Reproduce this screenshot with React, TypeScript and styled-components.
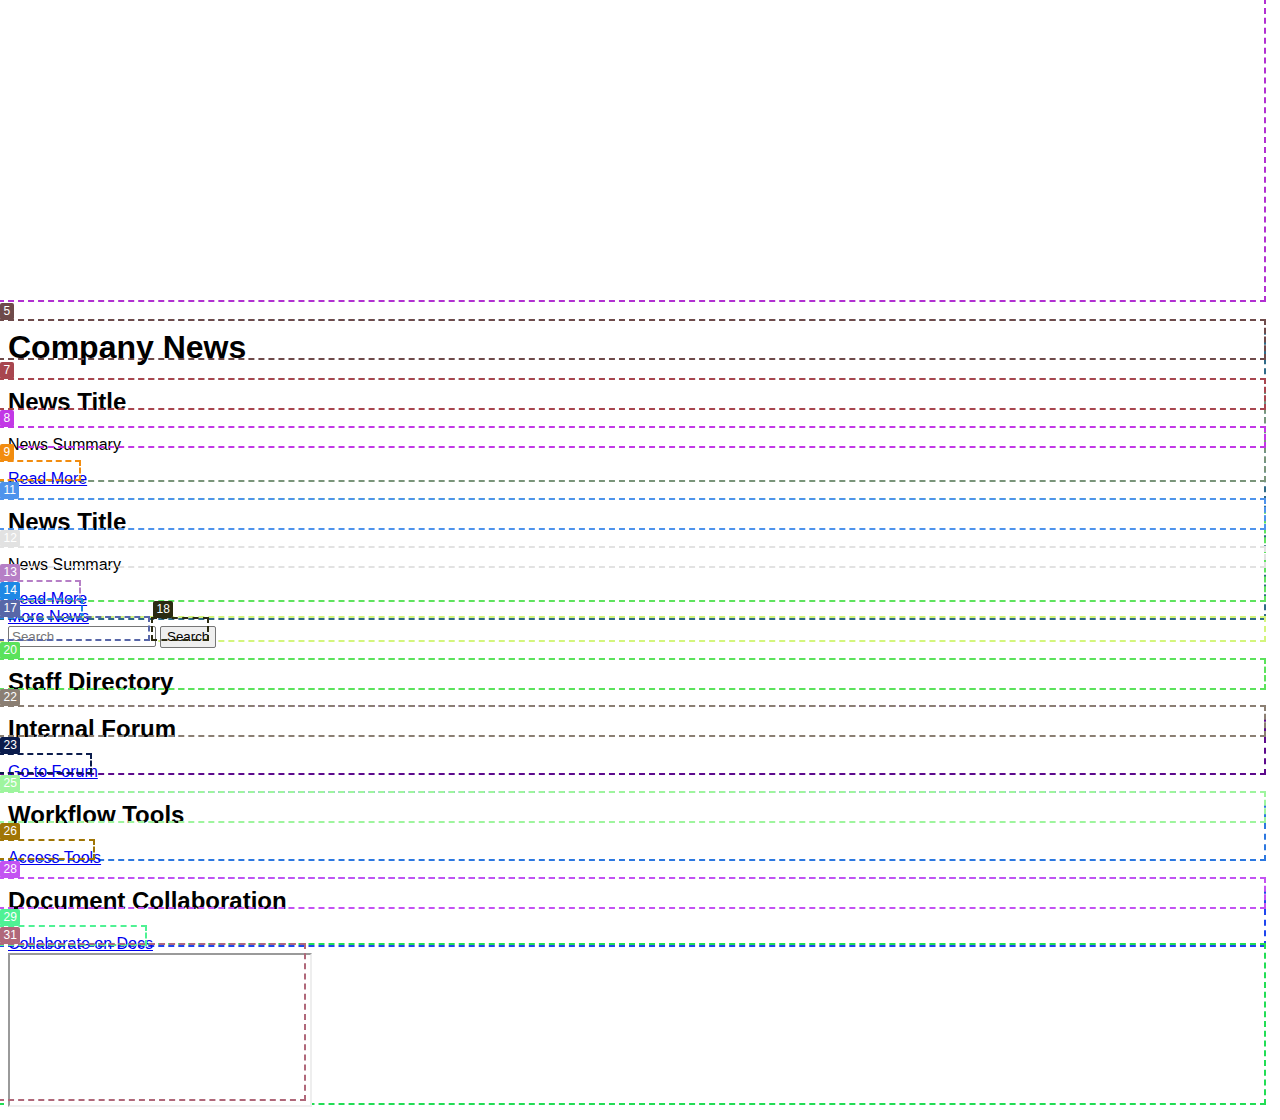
import React from "react";
import styled, { createGlobalStyle, css } from "styled-components";

const GlobalStyle = createGlobalStyle`
  html, body { background: #ffffff; }
  body {
    margin: 0;
    font-family: "Liberation Sans", Arial, sans-serif;
    font-size: 16px;
    color: #000000;
  }
`;

type C = { $c: string };

/* debug frame: a dashed outline drawn 8px up/left of the element */
const framed = css<C>`
  position: relative;
  &::before {
    content: "";
    position: absolute;
    left: -8px;
    top: -8px;
    width: 100%;
    height: 100%;
    outline: 2px dashed ${(p) => p.$c};
    pointer-events: none;
  }
`;

const Page = styled.div`
  padding: 8px;
`;

const Badge = styled.span<C>`
  position: absolute;
  left: -8px;
  top: -9px;
  transform: translateY(-100%);
  background: ${(p) => p.$c};
  color: #ffffff;
  font: 400 12px/17px "Liberation Sans", Arial, sans-serif;
  padding: 0 3.5px;
  border-radius: 2px;
  white-space: nowrap;
  text-decoration: none;
  pointer-events: none;
`;

const Header = styled.header<C>`
  ${framed}
  display: block;
  height: 300px;
`;

const NewsSection = styled.section<C>`
  ${framed}
  display: block;
`;

const Article = styled.article<C>`
  ${framed}
  display: block;
`;

const ToolSection = styled.section<C>`
  ${framed}
  display: block;
`;

const PageTitle = styled.h1<C>`
  ${framed}
  font-size: 32px;
  font-weight: 700;
  line-height: normal;
  margin: 21.44px 0;
`;

const Heading = styled.h2<C>`
  ${framed}
  font-size: 24px;
  font-weight: 700;
  line-height: normal;
  margin: 19.92px 0;
`;

const Summary = styled.p<C>`
  ${framed}
  margin: 16px 0;
`;

const TextLink = styled.a<C>`
  ${framed}
  color: #0000ee;
  text-decoration: underline;
`;

const SearchForm = styled.form<C>`
  ${framed}
  display: flex;
  align-items: flex-start;
  gap: 4px;
  height: 22px;
  margin: 0;
`;

const Field = styled.span<C>`
  ${framed}
  display: block;
`;

const SearchInput = styled.input`
  display: block;
  box-sizing: border-box;
  width: 148px;
  height: 21px;
  margin: 0;
  padding: 1px 3px;
  border: 1px solid #767676;
  border-radius: 2px;
  background: #ffffff;
  font: 400 13.333px "Liberation Sans", Arial, sans-serif;
  color: #000000;
  &::placeholder {
    color: #757575;
  }
`;

const SearchButton = styled.button<C>`
  ${framed}
  box-sizing: border-box;
  height: 22px;
  margin: 0;
  padding: 1px 6px;
  border: 1px solid #767676;
  border-radius: 2px;
  background: #efefef;
  color: #000000;
  font: 400 13.333px "Liberation Sans", Arial, sans-serif;
`;

const Footer = styled.footer<C>`
  ${framed}
  display: block;
`;

const FrameSlot = styled.span<C>`
  ${framed}
  display: inline-block;
`;

const DocFrame = styled.div`
  display: block;
  width: 300px;
  height: 150px;
  border-style: solid;
  border-width: 2px;
  border-color: #9a9a9a #eeeeee #eeeeee #9a9a9a;
  background: #ffffff;
`;

type NewsItem = {
  box: string;
  title: [string, string];
  summary: [string, string];
  link: [string, string];
};

const news: NewsItem[] = [
  { box: "#7a957a", title: ["#a8464f", "7"], summary: ["#c238e6", "8"], link: ["#f28c0f", "9"] },
  { box: "#5ee35e", title: ["#4e93ec", "11"], summary: ["#e2e2e2", "12"], link: ["#b67fc6", "13"] },
];

type Tool = {
  box: string;
  heading: [string, string, string];
  link?: [string, string, string];
};

const tools: Tool[] = [
  { box: "#5be25b", heading: ["#5be25b", "20", "Staff Directory"] },
  { box: "#5c0a8c", heading: ["#8b7f73", "22", "Internal Forum"], link: ["#0b1c4c", "23", "Go to Forum"] },
  { box: "#2c78e0", heading: ["#9ef59e", "25", "Workflow Tools"], link: ["#a07505", "26", "Access Tools"] },
  { box: "#1f46ee", heading: ["#c352f2", "28", "Document Collaboration"], link: ["#4ff294", "29", "Collaborate on Docs"] },
];

export default function App() {
  return (
    <Page>
      <GlobalStyle />
      <Header $c="#b12fd1" />
      <NewsSection $c="#2f6a88">
        <PageTitle $c="#6e4a4a">
          <Badge $c="#6e4a4a">5</Badge>Company News
        </PageTitle>
        {news.map((n, i) => (
          <Article key={i} $c={n.box}>
            <Heading $c={n.title[0]}>
              <Badge $c={n.title[0]}>{n.title[1]}</Badge>News Title
            </Heading>
            <Summary $c={n.summary[0]}>
              <Badge $c={n.summary[0]}>{n.summary[1]}</Badge>News Summary
            </Summary>
            <TextLink $c={n.link[0]} href="#">
              <Badge $c={n.link[0]}>{n.link[1]}</Badge>Read More
            </TextLink>
          </Article>
        ))}
        <TextLink $c="#1e88e5" href="#">
          <Badge $c="#1e88e5">14</Badge>More News
        </TextLink>
      </NewsSection>
      <SearchForm $c="#d4f57c" onSubmit={(e) => e.preventDefault()}>
        <Field $c="#5867a8">
          <Badge $c="#5867a8">17</Badge>
          <SearchInput type="text" placeholder="Search" />
        </Field>
        <SearchButton $c="#2b2b12" type="submit">
          <Badge $c="#2b2b12">18</Badge>Search
        </SearchButton>
      </SearchForm>
      {tools.map((t, i) => (
        <ToolSection key={i} $c={t.box}>
          <Heading $c={t.heading[0]}>
            <Badge $c={t.heading[0]}>{t.heading[1]}</Badge>
            {t.heading[2]}
          </Heading>
          {t.link && (
            <TextLink $c={t.link[0]} href="#">
              <Badge $c={t.link[0]}>{t.link[1]}</Badge>
              {t.link[2]}
            </TextLink>
          )}
        </ToolSection>
      ))}
      <Footer $c="#22dd55">
        <FrameSlot $c="#b0687a">
          <Badge $c="#b0687a">31</Badge>
          <DocFrame />
        </FrameSlot>
      </Footer>
    </Page>
  );
}
